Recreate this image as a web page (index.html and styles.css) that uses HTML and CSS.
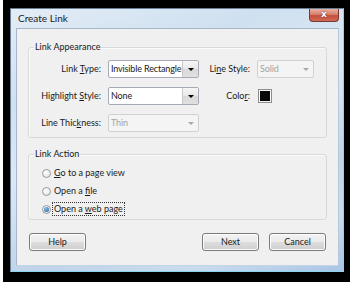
FILE: index.html
```html
<!DOCTYPE html>
<html>
<head>
<meta charset="utf-8">
<link rel="stylesheet" href="styles.css">
</head>
<body>
<div class="outer">
  <div class="window">
    <div class="titlebar">
      <span class="title">Create Link</span>
      <div class="close">x</div>
    </div>
    <div class="client">
      <div class="group g1">
        <div class="legend">Link Appearance</div>
        <div class="grid">
          <div class="lbl">Link <u>T</u>ype:</div>
          <div class="select"><span class="val">Invisible Rectangle</span><span class="btn"><i class="arrow"></i></span></div>
          <div class="lbl">Li<u>n</u>e Style:</div>
          <div class="select disabled"><span class="val">Solid</span><span class="btn"><i class="arrow"></i></span></div>

          <div class="lbl">Highlight <u>S</u>tyle:</div>
          <div class="select"><span class="val">None</span><span class="btn"><i class="arrow"></i></span></div>
          <div class="lbl">Colo<u>r</u>:</div>
          <div class="swatchcell"><span class="swatch"><span class="fill"></span></span></div>

          <div class="lbl">Line Thic<u>k</u>ness:</div>
          <div class="select disabled"><span class="val">Thin</span><span class="btn"><i class="arrow"></i></span></div>
          <div></div>
          <div></div>
        </div>
      </div>
      <div class="group g2">
        <div class="legend">Link Action</div>
        <div class="radios">
          <div class="row"><span class="radio"></span><span class="rtext"><u>G</u>o to a page view</span></div>
          <div class="row"><span class="radio"></span><span class="rtext">Open a <u>f</u>ile</span></div>
          <div class="row"><span class="radio checked"></span><span class="rtext focus">Open a <u>w</u>eb page</span></div>
        </div>
      </div>
      <div class="buttons">
        <div class="button">Help</div>
        <div class="right">
          <div class="button">Next</div>
          <div class="button">Cancel</div>
        </div>
      </div>
    </div>
  </div>
</div>
</body>
</html>
```
FILE: styles.css
```css
html, body {
  margin: 0;
  padding: 0;
  background: #fff;
}
body {
  font-family: Lato, "Open Sans", "DejaVu Sans", sans-serif;
  font-size: 9px;
  color: #1a1a1a;
}
u { text-decoration: underline; text-underline-offset: 1px; }

.outer {
  margin-left: 3px;
  width: 347px;
  height: 282px;
  box-sizing: border-box;
  background: #000;
  padding: 8px 6px 10px 7px;
}
.window {
  height: 100%;
  box-sizing: border-box;
  border: 1px solid #6b7f95;
  border-right-color: #8ad4ef;
  border-bottom-color: #8ad4ef;
  background: linear-gradient(160deg, #e3edf7 0%, #cfe0f0 25%, #dce9f5 45%, #bfd4ea 70%, #c9dcef 85%, #a9c6e6 100%);
  padding: 0 4px 5px 5px;
  display: flex;
  flex-direction: column;
}
.titlebar {
  height: 19px;
  display: flex;
  justify-content: space-between;
  align-items: flex-start;
  flex-shrink: 0;
}
.title {
  padding-left: 2px;
  padding-top: 3px;
  font-size: 10px;
  color: #1a1a1a;
}
.close {
  width: 30px;
  height: 13px;
  box-sizing: border-box;
  border: 1px solid #7a3a32;
  border-top: none;
  border-radius: 0 0 4px 4px;
  background: linear-gradient(#e8b3a5, #d8806c 45%, #c4503b 55%, #d06a55);
  color: #fff;
  font-family: "DejaVu Sans", sans-serif;
  font-weight: bold;
  font-size: 9px;
  line-height: 11px;
  text-align: center;
  text-shadow: 0 0 2px #6b1e14;
}
.client {
  flex: 1;
  background: #f0f0f0;
  border: 1px solid #a7b7c8;
  border-right-color: #b8cad9;
  border-bottom-color: #c4d4e2;
  display: flex;
  flex-direction: column;
}
.group {
  margin: 0 11px 0 11px;
  border: 1px solid #d9d9d9;
  border-radius: 3px;
  box-shadow: inset 1px 1px 0 #fbfbfb;
}
.g1 {
  margin-top: 18px;
  padding-bottom: 5px;
}
.g2 {
  margin-top: 16px;
  padding-bottom: 1px;
}
.legend {
  margin-top: -7px;
  margin-left: 5px;
  width: fit-content;
  padding: 0 1px;
  background: #f0f0f0;
  line-height: 12px;
  height: 12px;
}
.grid {
  margin-top: 7px;
  display: grid;
  grid-template-columns: 72px 93px 42px 57px;
  grid-template-rows: 18px 18px 18px;
  column-gap: 7px;
  row-gap: 9px;
}
.grid > :nth-child(4n+2) { margin-right: 2px; }
.lbl {
  text-align: right;
  line-height: 18px;
  white-space: nowrap;
}
.select {
  display: flex;
  height: 18px;
  box-sizing: border-box;
  border: 1px solid #a5acb5;
  border-radius: 2px;
  background: #fff;
}
.select .val {
  flex: 1;
  padding-left: 2px;
  line-height: 16px;
  white-space: nowrap;
  overflow: hidden;
  letter-spacing: -0.15px;
}
.select .btn {
  width: 15px;
  flex-shrink: 0;
  display: flex;
  align-items: center;
  justify-content: center;
  background: linear-gradient(#f6f6f6, #e8e8e8 50%, #d9d9d9 51%, #e0e0e0);
  border-left: 1px solid #c8c8c8;
}
.arrow {
  width: 0;
  height: 0;
  border-left: 3px solid transparent;
  border-right: 3px solid transparent;
  border-top: 3px solid #000;
}
.select.disabled {
  border-color: #cfd1d4;
  background: #f4f4f4;
  color: #a3a3a3;
}
.select.disabled .btn {
  background: transparent;
  border-left: none;
}
.select.disabled .arrow {
  border-top-color: #a8a8a8;
}
.swatchcell {
  display: flex;
  align-items: center;
  padding-left: 1px;
}
.swatch {
  width: 14px;
  height: 14px;
  box-sizing: border-box;
  border: 1px solid #8e8e8e;
  padding: 1px;
  background: #f6f6f6;
  display: flex;
}
.swatch .fill {
  flex: 1;
  background: #080808;
}
.radios {
  margin-top: 4px;
  padding-left: 13px;
}
.row {
  height: 18px;
  display: flex;
  align-items: center;
  gap: 1px;
}
.radio {
  width: 9px;
  height: 9px;
  box-sizing: border-box;
  border-radius: 50%;
  border: 1px solid #979a9d;
  background: radial-gradient(circle at 40% 35%, #ffffff, #dcdfe2);
  display: flex;
  align-items: center;
  justify-content: center;
}
.radio.checked::after {
  content: "";
  width: 5px;
  height: 5px;
  border-radius: 50%;
  background: radial-gradient(circle at 40% 35%, #8ac0ee, #1f5a93);
}
.rtext {
  line-height: 12px;
  padding: 0 1px;
  border: 1px solid transparent;
}
.rtext.focus {
  border: 1px dotted #333;
}
.buttons {
  margin: 13px 12px 0 12px;
  display: flex;
  justify-content: space-between;
}
.right {
  display: flex;
  gap: 10px;
}
.button {
  width: 57px;
  height: 18px;
  box-sizing: border-box;
  border: 1px solid #7b7b7b;
  border-radius: 3px;
  background: linear-gradient(#f3f3f3, #ebebeb 48%, #dddddd 52%, #cfcfcf);
  box-shadow: inset 0 0 0 1px #fcfcfc;
  text-align: center;
  line-height: 16px;
}
```
